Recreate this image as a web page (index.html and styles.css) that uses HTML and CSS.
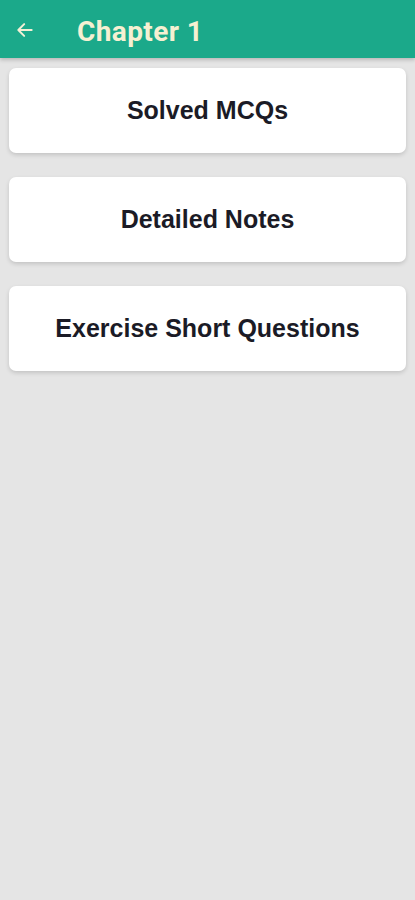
FILE: index.html
```html
<!DOCTYPE html>
<html>
<head>
  <title>Chapter 1</title>
  <meta name="viewport" content="width=device-width, initial-scale=1.0">
  <link rel="stylesheet" href="styles.css">
</head>
<body>
  <!-- App bar -->
  <div class="app-bar">
    <div class="back-btn">
      <svg width="20" height="20" viewBox="0 0 24 24">
        <path d="M20 12H5M11 5l-7 7 7 7" fill="none" stroke="#f4f0d6" stroke-width="2.4" stroke-linecap="round" stroke-linejoin="round"/>
      </svg>
    </div>
    <div class="app-title">Chapter 1</div>
  </div>

  <!-- Menu cards -->
  <div class="menu-list">
    <div class="menu-card">Solved MCQs</div>
    <div class="menu-card">Detailed Notes</div>
    <div class="menu-card">Exercise Short Questions</div>
  </div>
</body>
</html>
```

FILE: styles.css
```css
/* Base */
body, html {
  margin: 0;
  padding: 0;
  height: 100%;
  background: #e5e5e5;
  font-family: 'Liberation Sans', Arial, sans-serif;
}

/* App bar */
.app-bar {
  height: 58px;
  background: #1ba98a;
  display: flex;
  align-items: center;
  padding-left: 15px;
  box-shadow: 0 2px 4px rgba(0, 0, 0, 0.2);
}

.back-btn {
  width: 20px;
  height: 20px;
  display: flex;
  margin-right: 42px;
  margin-top: 2px;
}

.app-title {
  color: #f6f0d2;
  font-family: Roboto, 'Liberation Sans', sans-serif;
  font-weight: bold;
  font-size: 28px;
  letter-spacing: 0.4px;
  margin-top: 4px;
}

/* Cards */
.menu-list {
  display: flex;
  flex-direction: column;
  gap: 24px;
  padding: 10px 9px;
}

.menu-card {
  height: 85px;
  background: #fff;
  border-radius: 7px;
  box-shadow: 0 2px 4px rgba(0, 0, 0, 0.15);
  display: flex;
  justify-content: center;
  align-items: center;
  font-size: 25px;
  font-weight: bold;
  color: #1b1b26;
}
```
